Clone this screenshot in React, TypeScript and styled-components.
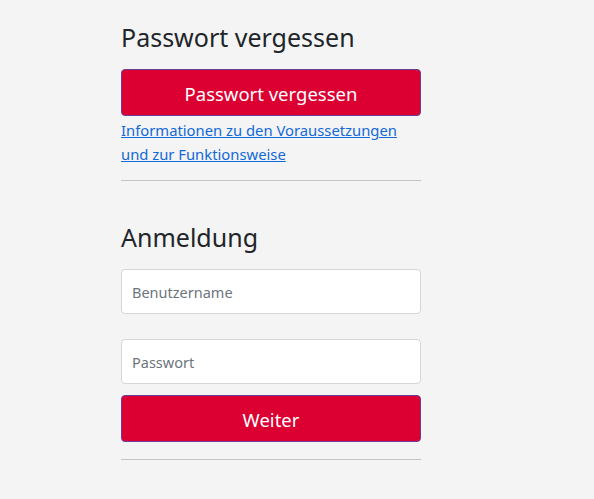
import React from "react";
import styled, { createGlobalStyle } from "styled-components";

const Global = createGlobalStyle`
  html, body { margin: 0; padding: 0; background: #f4f4f4; }
  body { font-family: "Noto Sans", "Open Sans", sans-serif; color: #212529; }
  * { box-sizing: border-box; }
`;

const Page = styled.div`
  padding: 20px 0 0 121px;
  min-height: 499px;
`;

const Column = styled.div`
  width: 300px;
  display: flex;
  flex-direction: column;
`;

const Heading = styled.h3<{ $top?: number }>`
  margin: ${(p) => p.$top ?? 0}px 0 0 0;
  font-size: 25px;
  font-weight: 400;
  line-height: 34px;
  color: #212529;
`;

const PrimaryButton = styled.button<{ $top: number }>`
  margin-top: ${(p) => p.$top}px;
  height: 47px;
  width: 100%;
  background: #dc0032;
  border: 1px solid #6a3d9a;
  border-radius: 4px;
  color: #fff;
  font-family: inherit;
  font-size: 18.5px;
  padding-top: 2px;
  cursor: pointer;
`;

const InfoLink = styled.a`
  display: block;
  margin-top: 2px;
  font-size: 14.8px;
  line-height: 24px;
  color: #1269d8;
  text-decoration: underline;
`;

const Rule = styled.hr<{ $top: number }>`
  margin: ${(p) => p.$top}px 0 0 0;
  border: 0;
  border-top: 1px solid #c4c4c4;
  width: 100%;
`;

const Field = styled.input<{ $top: number }>`
  margin-top: ${(p) => p.$top}px;
  height: 45px;
  width: 100%;
  background: #fff;
  border: 1px solid #d6d6d6;
  border-radius: 4px;
  padding: 0 10px;
  font-family: inherit;
  font-size: 14.5px;
  color: #212529;
  &::placeholder { color: #6c757d; }
`;

export default function App() {
  return (
    <>
      <Global />
      <Page>
        <Column>
          <Heading>Passwort vergessen</Heading>
          <PrimaryButton $top={15}>Passwort vergessen</PrimaryButton>
          <InfoLink href="#">
            Informationen zu den Voraussetzungen
            <br />
            und zur Funktionsweise
          </InfoLink>
          <Rule $top={14} />
          <Heading $top={39}>Anmeldung</Heading>
          <Field $top={15} placeholder="Benutzername" />
          <Field $top={25} placeholder="Passwort" />
          <PrimaryButton $top={11}>Weiter</PrimaryButton>
          <Rule $top={17} />
        </Column>
      </Page>
    </>
  );
}
